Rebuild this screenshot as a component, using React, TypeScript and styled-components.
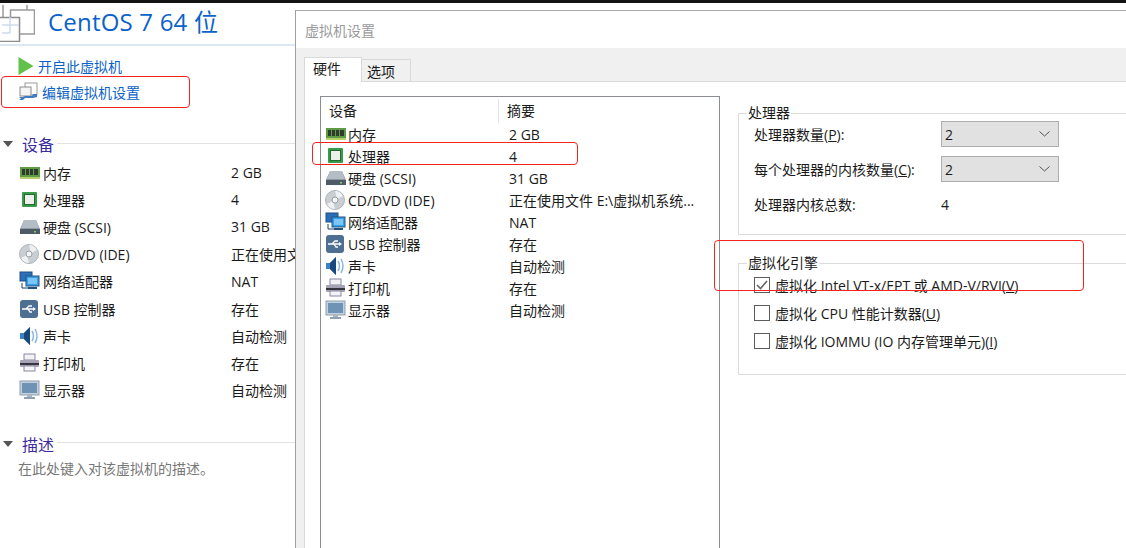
import React from "react";
import styled, { createGlobalStyle } from "styled-components";

const GlobalStyle = createGlobalStyle`
  html, body {
    margin: 0;
    padding: 0;
    background: #fff;
  }
  body {
    font-family: "Open Sans", "Noto Sans CJK SC", sans-serif;
    font-size: 14px;
    color: #1a1a1a;
  }
`;

const Page = styled.div`
  position: relative;
  width: 1126px;
  height: 548px;
  overflow: hidden;
  display: flex;
  flex-direction: column;
`;

const TopEdge = styled.div`
  height: 3px;
  background: #141414;
  flex: none;
`;

const Columns = styled.div`
  flex: 1;
  display: flex;
  min-height: 0;
`;

/* left summary panel */
const Summary = styled.aside`
  width: 295px;
  flex: none;
  overflow: hidden;
`;

const Header = styled.header`
  height: 43px;
  box-sizing: border-box;
  border-bottom: 2px solid #dbe8f4;
  display: flex;
  align-items: center;
  gap: 13px;
  margin-bottom: 7px;
  overflow: hidden;
`;

const Title = styled.h1`
  margin: -4px 0 0;
  font-size: 24px;
  font-weight: 400;
  line-height: 32px;
  color: #0a62c9;
  letter-spacing: 0.2px;
`;

const ActionList = styled.div`
  display: flex;
  flex-direction: column;
  padding-left: 18px;
`;

const Action = styled.a`
  height: 26px;
  display: flex;
  align-items: center;
  gap: 4px;
  color: #0a62c9;
  font-size: 14px;
  white-space: nowrap;
`;

const SectionHead = styled.div<{ $top: number }>`
  display: flex;
  align-items: center;
  margin-top: ${(p) => p.$top}px;
  height: 24px;
  padding-left: 3px;
`;

const Caret = styled.span`
  width: 0;
  height: 0;
  border-left: 5.5px solid transparent;
  border-right: 5.5px solid transparent;
  border-top: 6px solid #555;
  margin-right: 9px;
`;

const SectionName = styled.span`
  font-size: 16px;
  color: #3a2a9c;
  margin-right: 3px;
`;

const SectionRule = styled.span`
  flex: 1;
  height: 1px;
  background: #e2e2e2;
  margin-top: -2px;
`;

const SummaryRows = styled.div`
  display: flex;
  flex-direction: column;
  margin-top: 3px;
`;

const SummaryRow = styled.div`
  height: 27.2px;
  display: flex;
  align-items: center;
  padding-left: 19px;
  white-space: nowrap;
`;

const SummaryName = styled.span`
  width: 212px;
  flex: none;
  display: flex;
  align-items: center;
  gap: 2px;
`;

const Description = styled.p`
  margin: 2px 0 0 18px;
  color: #777;
  font-size: 14px;
`;

/* settings dialog */
const Dialog = styled.section`
  flex: 1;
  margin-top: 7px;
  border-left: 1px solid #a0a0a0;
  border-top: 1px solid #a9a9a9;
  display: flex;
  flex-direction: column;
  min-width: 0;
`;

const DialogTitle = styled.div`
  height: 37px;
  display: flex;
  align-items: center;
  padding-left: 9px;
  color: #9a9a9a;
  font-size: 14px;
  flex: none;
`;

const DialogBody = styled.div`
  flex: 1;
  background: #f0f0f0;
  padding: 9px 0 0 8px;
  display: flex;
  flex-direction: column;
  min-height: 0;
`;

const TabBar = styled.div`
  display: flex;
  align-items: flex-end;
  height: 25px;
  flex: none;
  position: relative;
  z-index: 1;
  margin-bottom: -1px;
`;

const Tab = styled.div<{ $active?: boolean }>`
  box-sizing: border-box;
  height: ${(p) => (p.$active ? 25 : 23)}px;
  width: ${(p) => (p.$active ? 58 : 50)}px;
  padding-left: ${(p) => (p.$active ? 8 : 5)}px;
  padding-top: ${(p) => (p.$active ? 0 : 1)}px;
  background: ${(p) => (p.$active ? "#fff" : "#f0f0f0")};
  border: 1px solid #d9d9d9;
  border-bottom: ${(p) => (p.$active ? "none" : "1px solid #d9d9d9")};
  margin-left: ${(p) => (p.$active ? 0 : -1)}px;
  line-height: 22px;
`;

const TabPanel = styled.div`
  flex: 1;
  background: #fff;
  border: 1px solid #d9d9d9;
  border-right: none;
  border-bottom: none;
  padding: 14px 0 0 15px;
  display: flex;
  gap: 18px;
  min-height: 0;
`;

const DeviceList = styled.div`
  width: 400px;
  flex: none;
  box-sizing: border-box;
  border: 1px solid #8a8d92;
  border-bottom: none;
  border-left-width: 1.5px;
  padding-top: 1px;
`;

const ListHead = styled.div`
  display: flex;
  height: 25px;
  align-items: center;
`;

const HeadCell = styled.div<{ $w?: number }>`
  width: ${(p) => (p.$w ? `${p.$w}px` : "auto")};
  flex: none;
  box-sizing: border-box;
  padding-left: 8px;
  height: 24px;
  line-height: 24px;
  border-right: ${(p) => (p.$w ? "1px solid #e4e4e4" : "none")};
`;

const ListRow = styled.div`
  display: flex;
  align-items: center;
  height: 22px;
  white-space: nowrap;
`;

const ListName = styled.span`
  width: 184px;
  flex: none;
  padding-left: 4px;
  display: flex;
  align-items: center;
  gap: 1px;
`;

const ListValue = styled.span`
  width: 211px;
  overflow: hidden;
  text-overflow: ellipsis;
`;

const Options = styled.div`
  flex: 1;
  min-width: 0;
  display: flex;
  flex-direction: column;
  padding-top: 9px;
  gap: 20px;
`;

const Group = styled.fieldset<{ $h: number }>`
  margin: 0;
  height: ${(p) => p.$h}px;
  box-sizing: border-box;
  border: 1px solid #dcdcdc;
  border-right: none;
  padding: 0 0 0 15px;
  min-width: 0;
`;

const Legend = styled.legend`
  padding: 0 1px;
  margin-left: -7px;
  line-height: 16px;
`;

const FieldRow = styled.div`
  display: flex;
  align-items: center;
  height: 26px;
  margin-bottom: 9px;
`;

const FieldLabel = styled.label`
  width: 187px;
  flex: none;
`;

const Select = styled.div`
  width: 118px;
  height: 26px;
  box-sizing: border-box;
  background: #e1e1e1;
  border: 1px solid #adadad;
  display: flex;
  align-items: center;
  justify-content: space-between;
  padding: 0 8px 0 3px;
`;

const CheckRow = styled.label`
  display: flex;
  align-items: center;
  gap: 5px;
  height: 28px;
  white-space: nowrap;
`;

const CheckBox = styled.span`
  width: 16px;
  height: 16px;
  box-sizing: border-box;
  border: 1px solid #5c5c5c;
  background: #fff;
  display: flex;
  align-items: center;
  justify-content: center;
  flex: none;
`;

const Key = styled.span`
  text-decoration: underline;
`;

/* red call-outs drawn over the screenshot */
const Callout = styled.div`
  position: absolute;
  box-sizing: border-box;
  border: 1px solid #f4241c;
  border-radius: 4px;
  pointer-events: none;
`;

const EditCallout = styled(Callout)`
  left: 1px;
  top: 76px;
  width: 189px;
  height: 32px;
`;

const CpuCallout = styled(Callout)`
  left: 312px;
  top: 142px;
  width: 266px;
  height: 23px;
`;

const EngineCallout = styled(Callout)`
  left: 714px;
  top: 240px;
  width: 370px;
  height: 51px;
`;

const IconBox = styled.svg`
  flex: none;
  display: block;
`;

type DeviceKind = "ram" | "cpu" | "disk" | "cd" | "net" | "usb" | "sound" | "printer" | "screen";

const DeviceIcon = ({ kind }: { kind: DeviceKind }) => (
  <IconBox width="22" height="20" viewBox="0 0 22 20">
    {kind === "ram" && (
      <>
        <rect x="1" y="4" width="20" height="10" fill="#5f9a45" />
        <rect x="1" y="14" width="20" height="2" fill="#b9cf6a" />
        <path d="M3 6h3v6H3zM7 6h3v6H7zM11 6h3v6h-3zM15 6h4v6h-4z" fill="#2f3b2d" />
      </>
    )}
    {kind === "cpu" && (
      <>
        <rect x="3" y="2" width="15" height="15" rx="1" fill="#3a9a4a" />
        <rect x="5.5" y="4.5" width="10" height="10" fill="#eeeeea" stroke="#1f6b30" />
      </>
    )}
    {kind === "disk" && (
      <>
        <path d="M5 3h12l4 9v5H1v-5z" fill="#8d99a6" />
        <path d="M5 3h12l3 8H2z" fill="#b4bdc6" />
        <rect x="1" y="12" width="20" height="5" fill="#4e5a66" />
        <rect x="15" y="14" width="2" height="1.5" fill="#7fd06a" />
      </>
    )}
    {kind === "cd" && (
      <>
        <circle cx="10" cy="10" r="9.5" fill="#c9ced3" stroke="#aeb4ba" />
        <path d="M10 1a9 9 0 0 1 8 5l-6 3zM2 14l6-3 2 8a9 9 0 0 1-8-5z" fill="#eef0f2" />
        <circle cx="10" cy="10" r="3" fill="#f4f5f6" stroke="#9aa0a6" />
      </>
    )}
    {kind === "net" && (
      <>
        <rect x="1" y="1" width="12" height="9" fill="#2a6fb8" stroke="#1c4f86" />
        <path d="M3 12v5h8" fill="none" stroke="#1c3f66" />
        <rect x="7" y="5" width="13" height="10" fill="#35a0e8" stroke="#24527f" />
        <rect x="9" y="7" width="9" height="6" fill="#7cc6f5" />
        <rect x="9" y="16" width="9" height="2" fill="#24527f" />
      </>
    )}
    {kind === "usb" && (
      <>
        <rect x="1" y="1" width="18" height="18" rx="3" fill="#4d6f91" />
        <path d="M3 10h13M7 10l3-3h3M9 10l2 3h2" fill="none" stroke="#fff" strokeWidth="1.3" />
        <path d="M14 8l3 2-3 2z" fill="#fff" />
      </>
    )}
    {kind === "sound" && (
      <>
        <path d="M1 7h4l6-6v18l-6-6H1z" fill="#3f82c4" />
        <path d="M5 7l6-6v18l-6-6z" fill="#17497f" />
        <path d="M13 5q3 5 0 10M16 3q4 7 0 14" fill="none" stroke="#8ab6de" strokeWidth="1.5" />
      </>
    )}
    {kind === "printer" && (
      <>
        <rect x="5" y="1" width="11" height="6" fill="#f2f2f6" stroke="#8a88a0" />
        <rect x="1" y="7" width="19" height="7" rx="1" fill="#a5a3b5" />
        <rect x="1" y="10" width="19" height="2" fill="#35343f" />
        <rect x="5" y="13" width="11" height="5" fill="#f4f4f8" stroke="#8a88a0" />
      </>
    )}
    {kind === "screen" && (
      <>
        <rect x="1" y="1" width="19" height="14" fill="#c4d0dc" stroke="#8fa0b2" />
        <rect x="3" y="3" width="15" height="10" fill="#6f93b4" />
        <rect x="8" y="15" width="5" height="2" fill="#a9b6c2" />
        <rect x="5" y="17" width="11" height="2" fill="#8fa0b2" />
      </>
    )}
  </IconBox>
);

const VmIcon = () => (
  <IconBox width="35" height="37" viewBox="0 0 35 37">
    <rect x="10.5" y="5" width="24" height="24" fill="#fff" stroke="#9a9a9a" strokeWidth="1.5" />
    <path d="M3 0v12M27 0v5" stroke="#9a9a9a" strokeWidth="1.5" />
    <rect x="0" y="13" width="19" height="24" fill="#fff" />
    <path d="M0 12.5h19.5V36.5H0" fill="none" stroke="#8c8c8c" strokeWidth="1.5" />
    <path d="M2 20h17M10 12v16M2 28h8" fill="none" stroke="#cddcec" strokeWidth="1.5" />
  </IconBox>
);

const PlayIcon = () => (
  <IconBox width="16" height="18" viewBox="0 0 16 18">
    <path d="M0.5 0l15 9-15 9z" fill="#63c14a" />
  </IconBox>
);

const EditIcon = () => (
  <IconBox width="20" height="20" viewBox="0 0 20 20">
    <rect x="7" y="1" width="12" height="12" fill="#fff" stroke="#9a9a9a" />
    <rect x="2" y="5" width="11" height="9" fill="#f4f4f4" stroke="#8c8c8c" />
    <path d="M1 15h4l2-1h7l1-2h4v3l-4 1H7l-2 2H1l2-1.5z" fill="#3d7cc0" />
  </IconBox>
);

const Chevron = () => (
  <IconBox width="11" height="6" viewBox="0 0 11 6">
    <path d="M0.5 0.5l5 4.5 5-4.5" fill="none" stroke="#555" />
  </IconBox>
);

const Tick = () => (
  <IconBox width="12" height="10" viewBox="0 0 12 10">
    <path d="M1 5l3.5 3.5L11 1" fill="none" stroke="#666" strokeWidth="1.6" />
  </IconBox>
);

const devices: { kind: DeviceKind; name: string; short: string; full: string }[] = [
  { kind: "ram", name: "内存", short: "2 GB", full: "2 GB" },
  { kind: "cpu", name: "处理器", short: "4", full: "4" },
  { kind: "disk", name: "硬盘 (SCSI)", short: "31 GB", full: "31 GB" },
  { kind: "cd", name: "CD/DVD (IDE)", short: "正在使用文件 E:\\虚拟机系统", full: "正在使用文件 E:\\虚拟机系统..." },
  { kind: "net", name: "网络适配器", short: "NAT", full: "NAT" },
  { kind: "usb", name: "USB 控制器", short: "存在", full: "存在" },
  { kind: "sound", name: "声卡", short: "自动检测", full: "自动检测" },
  { kind: "printer", name: "打印机", short: "存在", full: "存在" },
  { kind: "screen", name: "显示器", short: "自动检测", full: "自动检测" },
];

const App = () => (
  <Page>
    <GlobalStyle />
    <TopEdge />
    <Columns>
      <Summary>
        <Header>
          <VmIcon />
          <Title>CentOS 7 64 位</Title>
        </Header>
        <ActionList>
          <Action>
            <PlayIcon />
            开启此虚拟机
          </Action>
          <Action>
            <EditIcon />
            编辑虚拟机设置
          </Action>
        </ActionList>
        <SectionHead $top={27}>
          <Caret />
          <SectionName>设备</SectionName>
          <SectionRule />
        </SectionHead>
        <SummaryRows>
          {devices.map((d) => (
            <SummaryRow key={d.kind}>
              <SummaryName>
                <DeviceIcon kind={d.kind} />
                {d.name}
              </SummaryName>
              {d.short}
            </SummaryRow>
          ))}
        </SummaryRows>
        <SectionHead $top={28}>
          <Caret />
          <SectionName>描述</SectionName>
          <SectionRule />
        </SectionHead>
        <Description>在此处键入对该虚拟机的描述。</Description>
      </Summary>

      <Dialog>
        <DialogTitle>虚拟机设置</DialogTitle>
        <DialogBody>
          <TabBar>
            <Tab $active>硬件</Tab>
            <Tab>选项</Tab>
          </TabBar>
          <TabPanel>
            <DeviceList>
              <ListHead>
                <HeadCell $w={178}>设备</HeadCell>
                <HeadCell>摘要</HeadCell>
              </ListHead>
              {devices.map((d) => (
                <ListRow key={d.kind}>
                  <ListName>
                    <DeviceIcon kind={d.kind} />
                    {d.name}
                  </ListName>
                  <ListValue>{d.full}</ListValue>
                </ListRow>
              ))}
            </DeviceList>
            <Options>
              <Group $h={130}>
                <Legend>处理器</Legend>
                <FieldRow>
                  <FieldLabel>
                    处理器数量(<Key>P</Key>):
                  </FieldLabel>
                  <Select>
                    2
                    <Chevron />
                  </Select>
                </FieldRow>
                <FieldRow>
                  <FieldLabel>
                    每个处理器的内核数量(<Key>C</Key>):
                  </FieldLabel>
                  <Select>
                    2
                    <Chevron />
                  </Select>
                </FieldRow>
                <FieldRow>
                  <FieldLabel>处理器内核总数:</FieldLabel>4
                </FieldRow>
              </Group>
              <Group $h={120}>
                <Legend>虚拟化引擎</Legend>
                <CheckRow>
                  <CheckBox>
                    <Tick />
                  </CheckBox>
                  <span>
                    虚拟化 Intel VT-x/EPT 或 AMD-V/RVI(<Key>V</Key>)
                  </span>
                </CheckRow>
                <CheckRow>
                  <CheckBox />
                  <span>
                    虚拟化 CPU 性能计数器(<Key>U</Key>)
                  </span>
                </CheckRow>
                <CheckRow>
                  <CheckBox />
                  <span>
                    虚拟化 IOMMU (IO 内存管理单元)(<Key>I</Key>)
                  </span>
                </CheckRow>
              </Group>
            </Options>
          </TabPanel>
        </DialogBody>
      </Dialog>
    </Columns>
    <EditCallout />
    <CpuCallout />
    <EngineCallout />
  </Page>
);

export default App;
